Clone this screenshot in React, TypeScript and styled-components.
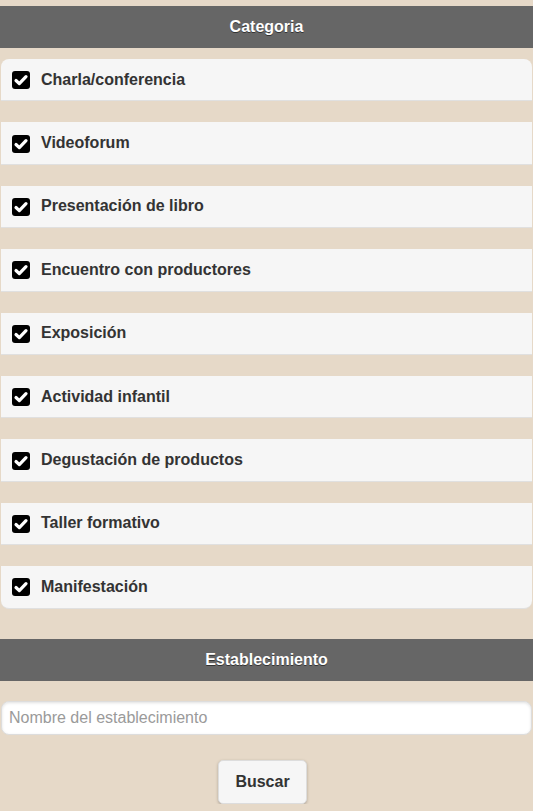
import React from "react";
import styled, { createGlobalStyle } from "styled-components";

const Global = createGlobalStyle`
  html, body { margin: 0; padding: 0; background: #e6d9c8; }
  body { font-family: "Liberation Sans", Arial, sans-serif; }
  * { box-sizing: border-box; }
`;

const Page = styled.div`
  padding-top: 6px;
  display: flex;
  flex-direction: column;
`;

const Bar = styled.div`
  height: 42px;
  background: #666666;
  color: #ffffff;
  font-weight: bold;
  font-size: 16px;
  display: flex;
  align-items: center;
  justify-content: center;
  text-shadow: 0 1px 0 #333;
`;

const List = styled.div`
  margin: 11px 1px 0 1px;
  display: flex;
  flex-direction: column;
  gap: 21px;
`;

const Row = styled.label<{ $first?: boolean; $last?: boolean }>`
  height: 42.4px;
  background: #f6f6f6;
  border-bottom: 1px solid #e0e0e0;
  display: flex;
  align-items: center;
  padding-left: 11px;
  gap: 11px;
  color: #333;
  font-weight: bold;
  font-size: 16px;
  text-shadow: 0 1px 0 #f3f3f3;
  border-top-left-radius: ${(p) => (p.$first ? "8px" : "0")};
  border-top-right-radius: ${(p) => (p.$first ? "8px" : "0")};
  border-bottom-left-radius: ${(p) => (p.$last ? "8px" : "0")};
  border-bottom-right-radius: ${(p) => (p.$last ? "8px" : "0")};
`;

const Box = styled.svg`
  width: 18px;
  height: 18px;
  flex: none;
  margin-top: 1px;
`;

const Check = () => (
  <Box viewBox="0 0 18 18">
    <rect x="0" y="0" width="18" height="18" rx="3" fill="#000" />
    <path d="M4 9.5 L7.3 12.6 L14 5.6" stroke="#fff" strokeWidth="3.2" fill="none" strokeLinecap="round" strokeLinejoin="round" />
  </Box>
);

const Bar2 = styled(Bar)`
  margin-top: 30px;
`;

const Input = styled.input`
  margin: 20px 1px 0 1px;
  height: 34px;
  border: 1px solid #ddd;
  border-radius: 8px;
  background: #fff;
  box-shadow: inset 0 1px 3px rgba(0,0,0,0.12);
  padding: 0 7px;
  font-family: "Liberation Sans", Arial, sans-serif;
  font-size: 16px;
  color: #333;
  &::placeholder { color: #9a9a9a; }
  outline: none;
`;

const Center = styled.div`
  display: flex;
  justify-content: center;
  margin-top: 25px;
`;

const Button = styled.button`
  width: 89px;
  height: 44px;
  margin-right: 8px;
  background: #f6f6f6;
  border: 1px solid #dddddd;
  border-radius: 5px;
  box-shadow: 0 1px 3px rgba(0,0,0,0.25);
  font-family: "Liberation Sans", Arial, sans-serif;
  font-weight: bold;
  font-size: 16px;
  color: #333;
  text-shadow: 0 1px 0 #f3f3f3;
`;

const items = [
  "Charla/conferencia",
  "Videoforum",
  "Presentación de libro",
  "Encuentro con productores",
  "Exposición",
  "Actividad infantil",
  "Degustación de productos",
  "Taller formativo",
  "Manifestación",
];

export default function App() {
  return (
    <Page>
      <Global />
      <Bar>Categoria</Bar>
      <List>
        {items.map((t, i) => (
          <Row key={t} $first={i === 0} $last={i === items.length - 1}>
            <Check />
            {t}
          </Row>
        ))}
      </List>
      <Bar2>Establecimiento</Bar2>
      <Input placeholder="Nombre del establecimiento" />
      <Center>
        <Button>Buscar</Button>
      </Center>
    </Page>
  );
}
